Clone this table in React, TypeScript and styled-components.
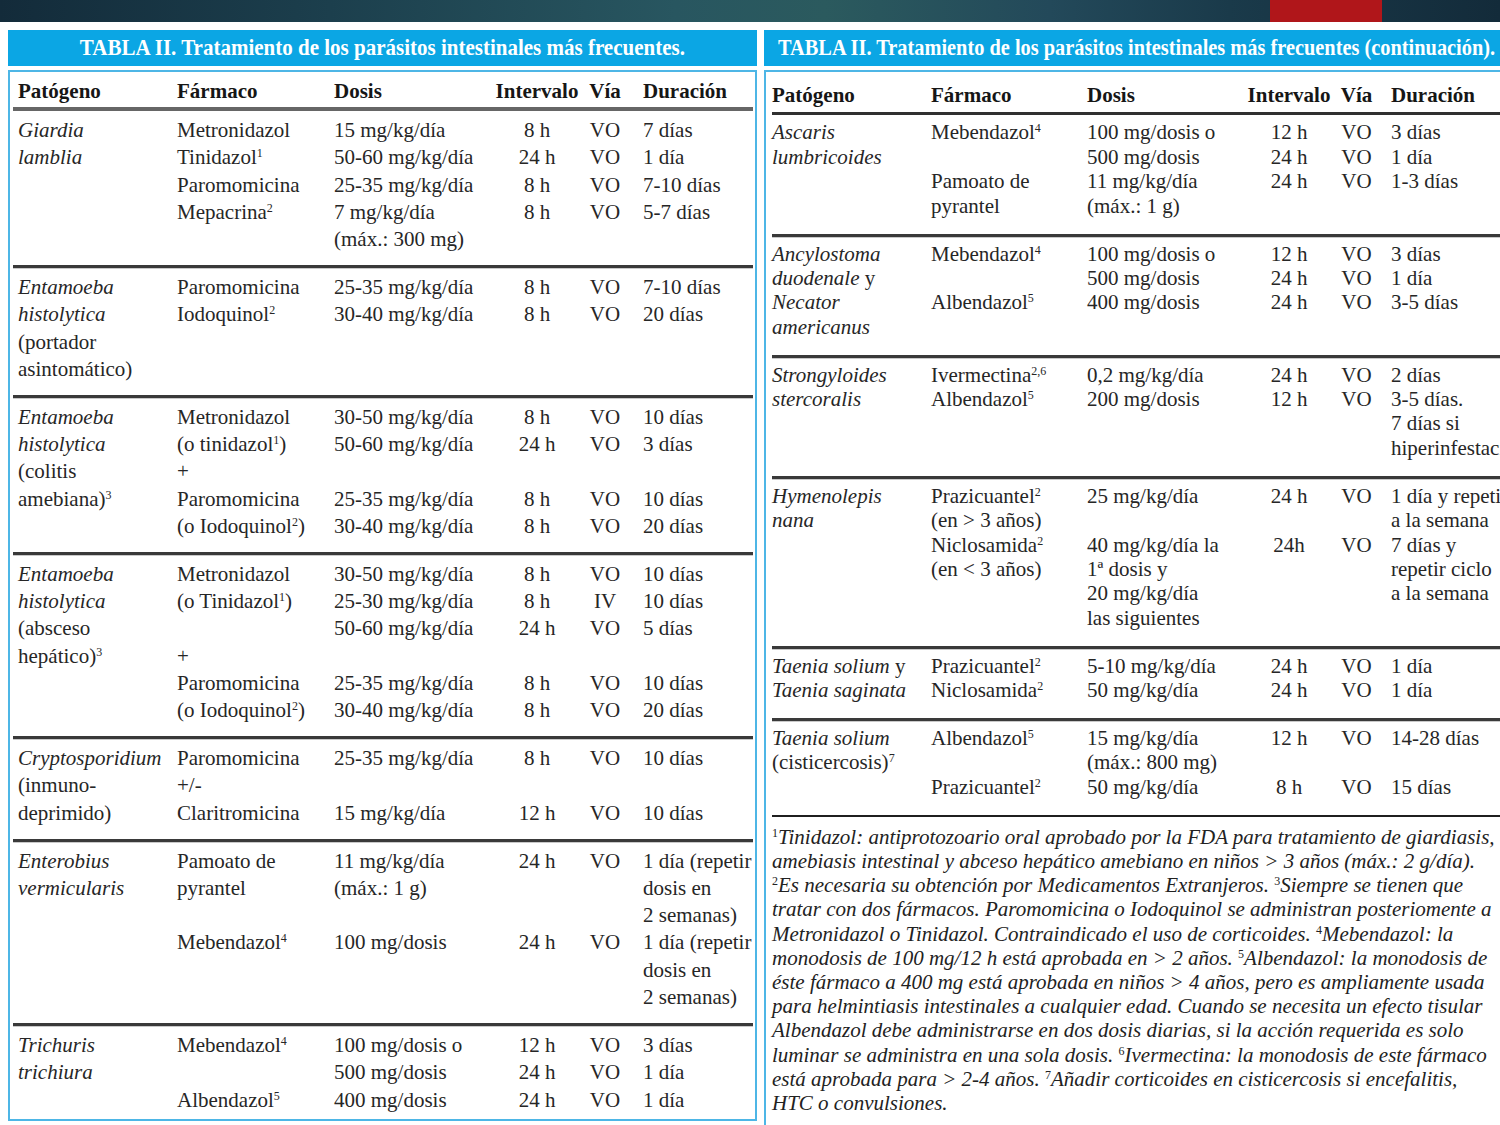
import React from 'react';
import styled, { createGlobalStyle, css } from 'styled-components';

type Variant = 'left' | 'right';

type EntryData = {
  f?: React.ReactNode;
  d?: React.ReactNode;
  i?: string;
  v?: string;
  u?: React.ReactNode;
};

type GroupData = { p: React.ReactNode; e: EntryData[] };

const GlobalStyle = createGlobalStyle`
  html, body {
    margin: 0;
    padding: 0;
    background: #ffffff;
  }
  body {
    width: 1500px;
    height: 1125px;
    overflow: hidden;
    font-family: "Liberation Serif", "Times New Roman", serif;
    color: #262626;
  }
`;

const Page = styled.div`
  width: 1500px;
  height: 1125px;
  overflow: hidden;
  display: flex;
  flex-direction: column;
`;

const TopBar = styled.header`
  flex: none;
  height: 22px;
  display: flex;
  justify-content: flex-end;
  padding-right: 118px;
  background: linear-gradient(
    90deg,
    #132b3a 0%,
    #1c3f4d 22%,
    #285660 45%,
    #2b5a5e 55%,
    #23495a 70%,
    #1a3a4a 82%,
    #132b3a 100%
  );
`;

const RedTab = styled.div`
  width: 112px;
  background: #b0161a;
`;

const Panels = styled.main`
  flex: 1;
  min-height: 0;
  display: grid;
  grid-template-columns: 749px 736px;
  column-gap: 7px;
  padding: 8px 0 0 8px;
  align-items: start;
`;

const Panel = styled.section`
  min-width: 0;
  overflow: hidden;
  display: flex;
  flex-direction: column;
`;

const TitleBar = styled.div<{ $align: 'center' | 'left' }>`
  height: 36px;
  background: #0ba6e4;
  display: flex;
  align-items: center;
  justify-content: ${(p) => (p.$align === 'center' ? 'center' : 'flex-start')};
  padding: 0 14px;
  overflow: hidden;
  white-space: nowrap;
`;

const TitleText = styled.span<{ $scale: number; $origin: string }>`
  display: inline-block;
  color: #ffffff;
  font-weight: 700;
  font-size: 23px;
  line-height: 36px;
  transform: scaleX(${(p) => p.$scale});
  transform-origin: ${(p) => p.$origin};
`;

const TableBox = styled.div<{ $v: Variant }>`
  margin-top: 4px;
  border: 2px solid #4db6e6;
  font-size: 21px;
  line-height: ${(p) => (p.$v === 'left' ? '27.2px' : '24.4px')};
  ${(p) =>
    p.$v === 'left'
      ? css`
          padding: 0 2px 0 3px;
        `
      : css`
          border-right: none;
          border-bottom: none;
          padding: 0 0 0 6px;
          min-height: 1100px;
        `}
`;

const HeaderRow = styled.div<{ $v: Variant }>`
  display: flex;
  font-weight: 700;
  color: #161616;
  ${(p) =>
    p.$v === 'left'
      ? css`
          padding: 6px 0 2px 5px;
          border-bottom: 4px solid #666666;
        `
      : css`
          padding: 11px 0 5px 0;
          border-bottom: 3px solid #303030;
        `}
`;

const Group = styled.div<{ $v: Variant; $last?: boolean }>`
  display: flex;
  ${(p) =>
    p.$v === 'left'
      ? css`
          padding: 6px 0 ${p.$last ? '5px' : '12px'} 5px;
        `
      : css`
          padding: 5px 0 15.5px 0;
        `}
  & + & {
    border-top: 3px solid ${(p) => (p.$v === 'left' ? '#4e4e4e' : '#3a3a3a')};
    box-shadow: inset 0 1px 0 #c9c9c9;
  }
`;

const PathCell = styled.div`
  width: 159px;
  flex: none;
  white-space: pre;
`;

const Entries = styled.div`
  flex: 1;
  min-width: 0;
  display: flex;
  flex-direction: column;
`;

const EntryGrid = styled.div<{ $v: Variant }>`
  display: grid;
  grid-template-columns: ${(p) =>
    p.$v === 'left' ? '157px 160px 86px 50px 1fr' : '156px 159px 86px 49px 1fr'};
  white-space: pre;
`;

const Cell = styled.div<{ $center?: boolean }>`
  text-align: ${(p) => (p.$center ? 'center' : 'left')};
`;

const DurCell = styled.div<{ $v: Variant }>`
  padding-left: ${(p) => (p.$v === 'left' ? '13px' : '10px')};
`;

const I = styled.i`
  font-style: italic;
`;

const Sup = styled.sup`
  font-size: 12px;
  line-height: 0;
  vertical-align: 7px;
`;

const Notes = styled.div`
  border-top: 2px solid #1f1f1f;
  padding-top: 8px;
  font-style: italic;
  font-size: 21px;
  line-height: 24.2px;
  color: #222222;
`;

const NoteLine = styled.div`
  white-space: nowrap;
`;

const NoteSup = styled.sup`
  font-size: 12px;
  line-height: 0;
  vertical-align: 7px;
  font-style: normal;
`;

const leftGroups: GroupData[] = [
  {
    p: <I>{'Giardia\nlamblia'}</I>,
    e: [
      { f: 'Metronidazol', d: '15 mg/kg/día', i: '8 h', v: 'VO', u: '7 días' },
      { f: <>Tinidazol<Sup>1</Sup></>, d: '50-60 mg/kg/día', i: '24 h', v: 'VO', u: '1 día' },
      { f: 'Paromomicina', d: '25-35 mg/kg/día', i: '8 h', v: 'VO', u: '7-10 días' },
      { f: <>Mepacrina<Sup>2</Sup></>, d: '7 mg/kg/día\n(máx.: 300 mg)', i: '8 h', v: 'VO', u: '5-7 días' },
    ],
  },
  {
    p: (
      <>
        <I>{'Entamoeba\nhistolytica'}</I>
        {'\n(portador\nasintomático)'}
      </>
    ),
    e: [
      { f: 'Paromomicina', d: '25-35 mg/kg/día', i: '8 h', v: 'VO', u: '7-10 días' },
      { f: <>Iodoquinol<Sup>2</Sup></>, d: '30-40 mg/kg/día', i: '8 h', v: 'VO', u: '20 días' },
    ],
  },
  {
    p: (
      <>
        <I>{'Entamoeba\nhistolytica'}</I>
        {'\n(colitis\namebiana)'}
        <Sup>3</Sup>
      </>
    ),
    e: [
      { f: 'Metronidazol', d: '30-50 mg/kg/día', i: '8 h', v: 'VO', u: '10 días' },
      { f: <>(o tinidazol<Sup>1</Sup>)</>, d: '50-60 mg/kg/día', i: '24 h', v: 'VO', u: '3 días' },
      { f: '+' },
      { f: 'Paromomicina', d: '25-35 mg/kg/día', i: '8 h', v: 'VO', u: '10 días' },
      { f: <>(o Iodoquinol<Sup>2</Sup>)</>, d: '30-40 mg/kg/día', i: '8 h', v: 'VO', u: '20 días' },
    ],
  },
  {
    p: (
      <>
        <I>{'Entamoeba\nhistolytica'}</I>
        {'\n(absceso\nhepático)'}
        <Sup>3</Sup>
      </>
    ),
    e: [
      { f: 'Metronidazol', d: '30-50 mg/kg/día', i: '8 h', v: 'VO', u: '10 días' },
      { f: <>(o Tinidazol<Sup>1</Sup>)</>, d: '25-30 mg/kg/día', i: '8 h', v: 'IV', u: '10 días' },
      { d: '50-60 mg/kg/día', i: '24 h', v: 'VO', u: '5 días' },
      { f: '+' },
      { f: 'Paromomicina', d: '25-35 mg/kg/día', i: '8 h', v: 'VO', u: '10 días' },
      { f: <>(o Iodoquinol<Sup>2</Sup>)</>, d: '30-40 mg/kg/día', i: '8 h', v: 'VO', u: '20 días' },
    ],
  },
  {
    p: (
      <>
        <I>Cryptosporidium</I>
        {'\n(inmuno-\ndeprimido)'}
      </>
    ),
    e: [
      { f: 'Paromomicina', d: '25-35 mg/kg/día', i: '8 h', v: 'VO', u: '10 días' },
      { f: '+/-' },
      { f: 'Claritromicina', d: '15 mg/kg/día', i: '12 h', v: 'VO', u: '10 días' },
    ],
  },
  {
    p: <I>{'Enterobius\nvermicularis'}</I>,
    e: [
      {
        f: 'Pamoato de\npyrantel',
        d: '11 mg/kg/día\n(máx.: 1 g)',
        i: '24 h',
        v: 'VO',
        u: '1 día (repetir\ndosis en\n2 semanas)',
      },
      {
        f: <>Mebendazol<Sup>4</Sup></>,
        d: '100 mg/dosis',
        i: '24 h',
        v: 'VO',
        u: '1 día (repetir\ndosis en\n2 semanas)',
      },
    ],
  },
  {
    p: <I>{'Trichuris\ntrichiura'}</I>,
    e: [
      { f: <>Mebendazol<Sup>4</Sup></>, d: '100 mg/dosis o', i: '12 h', v: 'VO', u: '3 días' },
      { d: '500 mg/dosis', i: '24 h', v: 'VO', u: '1 día' },
      { f: <>Albendazol<Sup>5</Sup></>, d: '400 mg/dosis', i: '24 h', v: 'VO', u: '1 día' },
    ],
  },
];

const rightGroups: GroupData[] = [
  {
    p: <I>{'Ascaris\nlumbricoides'}</I>,
    e: [
      { f: <>Mebendazol<Sup>4</Sup></>, d: '100 mg/dosis o', i: '12 h', v: 'VO', u: '3 días' },
      { d: '500 mg/dosis', i: '24 h', v: 'VO', u: '1 día' },
      { f: 'Pamoato de\npyrantel', d: '11 mg/kg/día\n(máx.: 1 g)', i: '24 h', v: 'VO', u: '1-3 días' },
    ],
  },
  {
    p: (
      <>
        <I>{'Ancylostoma\nduodenale'}</I>
        {' y\n'}
        <I>{'Necator\namericanus'}</I>
      </>
    ),
    e: [
      { f: <>Mebendazol<Sup>4</Sup></>, d: '100 mg/dosis o', i: '12 h', v: 'VO', u: '3 días' },
      { d: '500 mg/dosis', i: '24 h', v: 'VO', u: '1 día' },
      { f: <>Albendazol<Sup>5</Sup></>, d: '400 mg/dosis', i: '24 h', v: 'VO', u: '3-5 días' },
    ],
  },
  {
    p: <I>{'Strongyloides\nstercoralis'}</I>,
    e: [
      { f: <>Ivermectina<Sup>2,6</Sup></>, d: '0,2 mg/kg/día', i: '24 h', v: 'VO', u: '2 días' },
      {
        f: <>Albendazol<Sup>5</Sup></>,
        d: '200 mg/dosis',
        i: '12 h',
        v: 'VO',
        u: '3-5 días.\n7 días si\nhiperinfestación',
      },
    ],
  },
  {
    p: <I>{'Hymenolepis\nnana'}</I>,
    e: [
      {
        f: <>Prazicuantel<Sup>2</Sup>{'\n(en > 3 años)'}</>,
        d: '25 mg/kg/día',
        i: '24 h',
        v: 'VO',
        u: '1 día y repetir\na la semana',
      },
      {
        f: <>Niclosamida<Sup>2</Sup>{'\n(en < 3 años)'}</>,
        d: '40 mg/kg/día la\n1ª dosis y\n20 mg/kg/día\nlas siguientes',
        i: '24h',
        v: 'VO',
        u: '7 días y\nrepetir ciclo\na la semana',
      },
    ],
  },
  {
    p: (
      <>
        <I>Taenia solium</I>
        {' y\n'}
        <I>Taenia saginata</I>
      </>
    ),
    e: [
      { f: <>Prazicuantel<Sup>2</Sup></>, d: '5-10 mg/kg/día', i: '24 h', v: 'VO', u: '1 día' },
      { f: <>Niclosamida<Sup>2</Sup></>, d: '50 mg/kg/día', i: '24 h', v: 'VO', u: '1 día' },
    ],
  },
  {
    p: (
      <>
        <I>Taenia solium</I>
        {'\n(cisticercosis)'}
        <Sup>7</Sup>
      </>
    ),
    e: [
      {
        f: <>Albendazol<Sup>5</Sup></>,
        d: '15 mg/kg/día\n(máx.: 800 mg)',
        i: '12 h',
        v: 'VO',
        u: '14-28 días',
      },
      { f: <>Prazicuantel<Sup>2</Sup></>, d: '50 mg/kg/día', i: '8 h', v: 'VO', u: '15 días' },
    ],
  },
];

const noteLines: React.ReactNode[] = [
  <><NoteSup>1</NoteSup>Tinidazol: antiprotozoario oral aprobado por la FDA para tratamiento de giardiasis,</>,
  <>amebiasis intestinal y abceso hepático amebiano en niños {'>'} 3 años (máx.: 2 g/día).</>,
  <><NoteSup>2</NoteSup>Es necesaria su obtención por Medicamentos Extranjeros. <NoteSup>3</NoteSup>Siempre se tienen que</>,
  <>tratar con dos fármacos. Paromomicina o Iodoquinol se administran posteriomente a</>,
  <>Metronidazol o Tinidazol. Contraindicado el uso de corticoides. <NoteSup>4</NoteSup>Mebendazol: la</>,
  <>monodosis de 100 mg/12 h está aprobada en {'>'} 2 años. <NoteSup>5</NoteSup>Albendazol: la monodosis de</>,
  <>éste fármaco a 400 mg está aprobada en niños {'>'} 4 años, pero es ampliamente usada</>,
  <>para helmintiasis intestinales a cualquier edad. Cuando se necesita un efecto tisular</>,
  <>Albendazol debe administrarse en dos dosis diarias, si la acción requerida es solo</>,
  <>luminar se administra en una sola dosis. <NoteSup>6</NoteSup>Ivermectina: la monodosis de este fármaco</>,
  <>está aprobada para {'>'} 2-4 años. <NoteSup>7</NoteSup>Añadir corticoides en cisticercosis si encefalitis,</>,
  <>HTC o convulsiones.</>,
];

const Header = ({ v }: { v: Variant }) => (
  <HeaderRow $v={v}>
    <PathCell>Patógeno</PathCell>
    <Entries>
      <EntryGrid $v={v}>
        <Cell>Fármaco</Cell>
        <Cell>Dosis</Cell>
        <Cell $center>Intervalo</Cell>
        <Cell $center>Vía</Cell>
        <DurCell $v={v}>Duración</DurCell>
      </EntryGrid>
    </Entries>
  </HeaderRow>
);

const Rows = ({ groups, v }: { groups: GroupData[]; v: Variant }) => (
  <>
    {groups.map((g, gi) => (
      <Group key={gi} $v={v} $last={gi === groups.length - 1}>
        <PathCell>{g.p}</PathCell>
        <Entries>
          {g.e.map((e, ei) => (
            <EntryGrid key={ei} $v={v}>
              <Cell>{e.f ?? ''}</Cell>
              <Cell>{e.d ?? ''}</Cell>
              <Cell $center>{e.i ?? ''}</Cell>
              <Cell $center>{e.v ?? ''}</Cell>
              <DurCell $v={v}>{e.u ?? ''}</DurCell>
            </EntryGrid>
          ))}
        </Entries>
      </Group>
    ))}
  </>
);

export default function App() {
  return (
    <Page>
      <GlobalStyle />
      <TopBar>
        <RedTab />
      </TopBar>
      <Panels>
        <Panel>
          <TitleBar $align="center">
            <TitleText $scale={0.913} $origin="center">
              TABLA II. Tratamiento de los parásitos intestinales más frecuentes.
            </TitleText>
          </TitleBar>
          <TableBox $v="left">
            <Header v="left" />
            <Rows groups={leftGroups} v="left" />
          </TableBox>
        </Panel>
        <Panel>
          <TitleBar $align="left">
            <TitleText $scale={0.885} $origin="left center">
              TABLA II. Tratamiento de los parásitos intestinales más frecuentes (continuación).
            </TitleText>
          </TitleBar>
          <TableBox $v="right">
            <Header v="right" />
            <Rows groups={rightGroups} v="right" />
            <Notes>
              {noteLines.map((n, i) => (
                <NoteLine key={i}>{n}</NoteLine>
              ))}
            </Notes>
          </TableBox>
        </Panel>
      </Panels>
    </Page>
  );
}
